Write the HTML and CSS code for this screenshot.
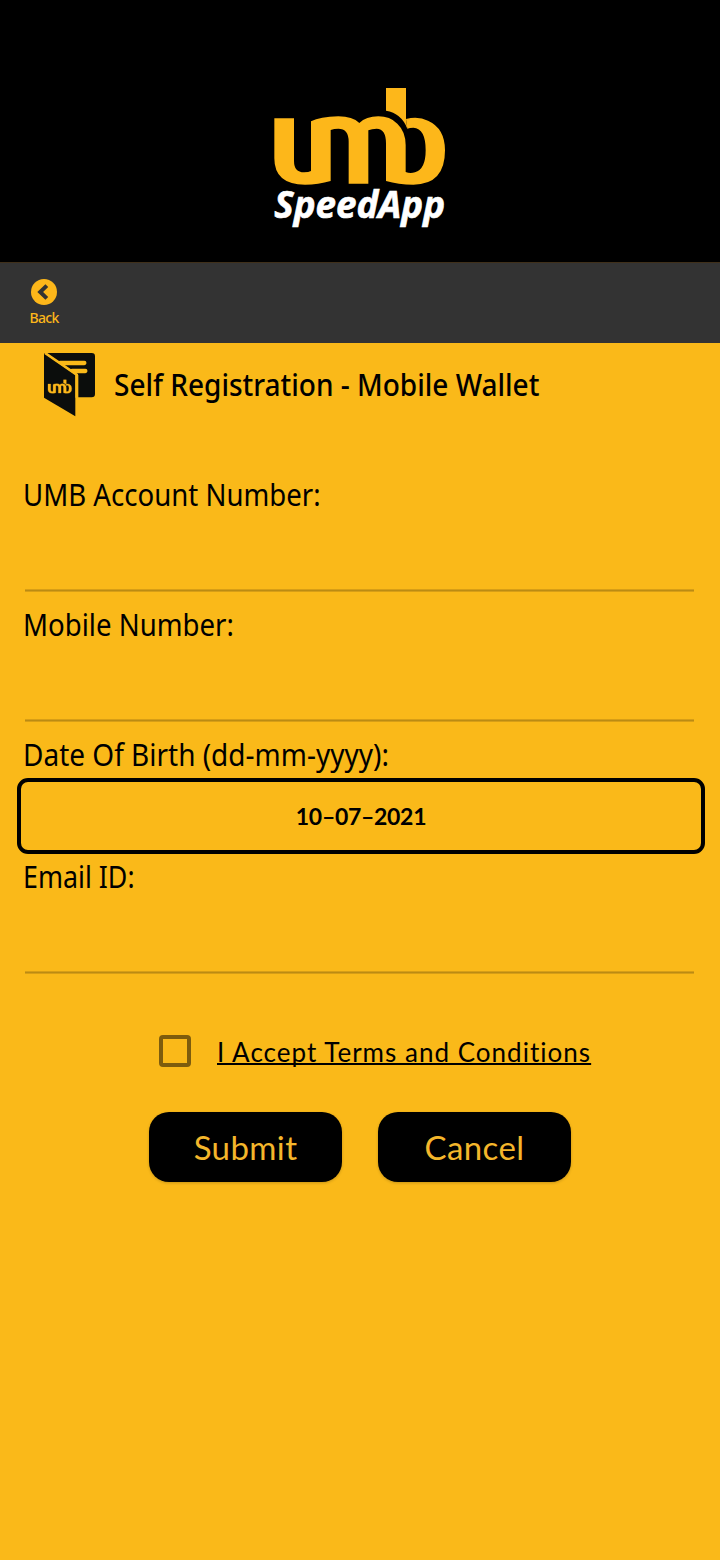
FILE: index.html
```html
<!DOCTYPE html>
<html lang="en">
<head>
<meta charset="utf-8">
<title>Self Registration - Mobile Wallet</title>
<link rel="stylesheet" href="styles.css">
</head>
<body>
<header class="brand">
  <svg class="logo" viewBox="0 0 600 495" role="img" aria-label="umb SpeedApp">
    <g id="mark" fill="#fdb71a">
      <path d="M43 130H102V258Q102 292 132 292Q146 292 153 288V139Q180 125 235 124Q278 124 298 144Q318 124 355 124Q390 124 412 146Q437 170 437 210V291Q450 296 465 292Q497 283 497 226Q497 160 460 158Q449 158 442 161L438 132Q475 123 504 137Q555 160 555 226Q555 329 460 329Q415 329 378 318V205Q378 162 350 161Q335 161 325 166V326H266V200Q266 161 235 161Q222 161 212 165V318Q175 329 135 329Q43 329 43 250Z"/>
      <path d="M378 39H438V132L442 161Q424 114 378 107Z"/>
    </g>
    <text class="logo-name" x="43" y="428" textLength="512" lengthAdjust="spacingAndGlyphs">SpeedApp</text>
  </svg>
</header>
<nav class="toolbar">
  <a class="back">
    <svg class="back-icon" viewBox="0 0 26 26"><circle cx="13" cy="13" r="13" fill="#fdb71a"/><path d="M15.8 6.6L9.2 13L15.8 19.4" fill="none" stroke="#333" stroke-width="4"/></svg>
    <span class="back-text">Back</span>
  </a>
</nav>
<main class="page">
  <div class="heading">
    <svg class="wallet" viewBox="0 0 156 192">
      <path d="M6 0H143Q153 0 153 10V123Q153 133 143 133H103V66L60 37Z" fill="#0b0d0c"/>
      <path d="M48 30H121M84 54H124" stroke="#fab919" stroke-width="13" stroke-linecap="round"/>
      <path d="M0 0L94 65V190L0 134Z" fill="#0b0d0c"/>
      <path d="M3 0L98 65V134" fill="none" stroke="#fab919" stroke-width="8"/>
      <use href="#mark" class="wallet-mark" transform="translate(6 75) scale(.139)"/>
    </svg>
    <h1 class="title"><span class="fit fit-title">Self Registration - Mobile Wallet</span></h1>
  </div>
  <form class="form">
    <div class="field"><label class="label"><span class="fit">UMB Account Number:</span></label><div class="line"></div></div>
    <div class="field"><label class="label"><span class="fit">Mobile Number:</span></label><div class="line"></div></div>
    <div class="field date-field"><label class="label"><span class="fit fit-date">Date Of Birth (dd-mm-yyyy):</span></label><div class="date"><span class="date-text">10–07–2021</span></div></div>
    <div class="field"><label class="label"><span class="fit fit-email">Email ID:</span></label><div class="line"></div></div>
    <div class="terms"><span class="check"></span><a class="terms-text">I Accept Terms and Conditions</a></div>
    <div class="actions"><button type="button" class="btn">Submit</button><button type="button" class="btn">Cancel</button></div>
  </form>
</main>
</body>
</html>
```
FILE: styles.css
```css
* { box-sizing: border-box; }
body { margin: 0; width: 720px; min-height: 1560px; background: #fab919; color: #000; font-family: "Noto Sans", "Open Sans", sans-serif; }
.brand { height: 262px; background: #000; display: flex; justify-content: center; padding-top: 75px; }
.logo { width: 200px; height: 165px; overflow: visible; }
.logo-name { font: italic 700 113px "Open Sans", sans-serif; fill: #fff; stroke: #fff; stroke-width: 2px; }
.toolbar { height: 81px; background: #333; border-top: 1px solid #40301a; padding: 16px 0 0 14px; }
.back { display: flex; flex-direction: column; align-items: center; width: 60px; }
.back-icon { width: 26px; height: 26px; display: block; }
.back-text { color: #fdb71a; font-size: 14px; font-weight: 500; line-height: 20px; margin-top: 3px; letter-spacing: -0.7px; }
.heading { display: flex; height: 119px; padding: 10px 0 0 44px; }
.wallet { width: 52px; height: 64px; flex: none; }
.wallet-mark { stroke: #fdb71a; stroke-width: 6px; }
.title { margin: 9px 0 0 18px; font-size: 31px; line-height: 44px; font-weight: 500; white-space: nowrap; }
.fit { display: inline-block; transform: scaleX(.92); transform-origin: left center; }
.fit-title { transform: scaleX(.903); }
.fit-date { transform: scaleX(.933); }
.fit-email { transform: scaleX(.893); }
.form { padding-top: 12px; }
.field { height: 130px; }
.label { display: block; height: 42px; line-height: 42px; padding-left: 23px; font-size: 30px; white-space: nowrap; }
.line { margin: 73px 26px 0 25px; height: 3px; background: linear-gradient(#d79e16 0 1px, #bb8b13 1px 2px, #d79e16 2px); }
.date-field { height: 122px; }
.date { margin: 2px 15px 0 17px; height: 76px; border: 4px solid #000; border-radius: 11px; display: flex; align-items: center; justify-content: center; }
.date-text { font: 700 23px "Lato", sans-serif; letter-spacing: -0.3px; }
.terms { display: flex; margin: 49px 0 0 159px; height: 32px; align-items: center; }
.check { width: 32px; height: 32px; border: 4px solid #7d5c0d; border-radius: 4px; flex: none; }
.terms-text { margin: 2px 0 0 26px; font: 400 26px/32px "Lato", sans-serif; letter-spacing: 1.02px; white-space: nowrap; text-decoration: underline; text-decoration-thickness: 2px; text-decoration-skip-ink: none; }
.actions { display: flex; gap: 36px; margin: 45px 0 0 149px; }
.btn { width: 193px; height: 70px; padding: 0; border: 0; border-radius: 20px; background: #000; color: #f4b62b; font: 400 33px "Lato", sans-serif; letter-spacing: 0.4px; box-shadow: 0 1px 3px rgba(0,0,0,.2); }
```
